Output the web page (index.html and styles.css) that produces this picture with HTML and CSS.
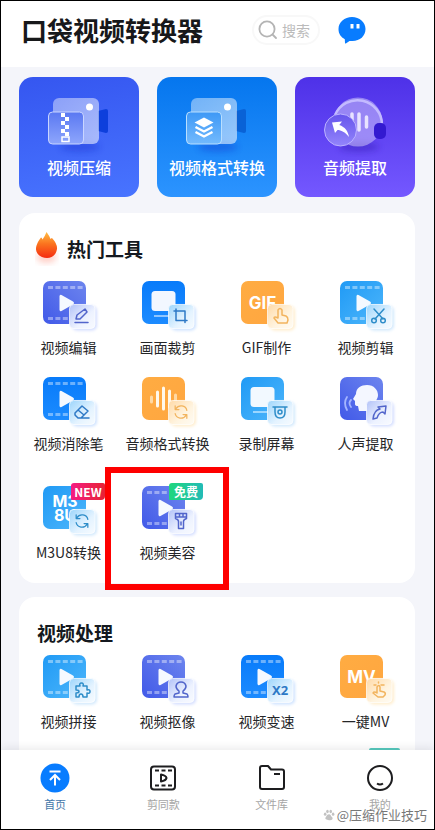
FILE: index.html
```html
<!DOCTYPE html>
<html lang="zh-CN">
<head>
<meta charset="utf-8">
<meta name="viewport" content="width=device-width, initial-scale=1">
<title>口袋视频转换器</title>
<link rel="stylesheet" href="styles.css">
</head>
<body>
<svg class="defs" aria-hidden="true">
  <defs>
    <linearGradient id="indigo" x1="1" y1="0" x2="0" y2="1"><stop offset="0" stop-color="#6d85ee"/><stop offset="1" stop-color="#4159e8"/></linearGradient>
    <linearGradient id="blue" x1="0" y1="0" x2="0" y2="1"><stop offset="0" stop-color="#087bfa"/><stop offset="1" stop-color="#1c8bff"/></linearGradient>
    <linearGradient id="sky" x1="0" y1="0" x2="1" y2="1"><stop offset="0" stop-color="#209af5"/><stop offset="1" stop-color="#4db6fb"/></linearGradient>
    <linearGradient id="orange" x1="0" y1="0" x2="1" y2="1"><stop offset="0" stop-color="#ffac42"/><stop offset="1" stop-color="#ffa640"/></linearGradient>
    <linearGradient id="frostIndigo" x1="0" y1="0" x2="1" y2="1"><stop offset="0.1" stop-color="#bccaf9"/><stop offset="0.6" stop-color="#edf2ff"/><stop offset="1" stop-color="#f8faff"/></linearGradient>
    <linearGradient id="frostBlue" x1="0" y1="0" x2="1" y2="1"><stop offset="0.1" stop-color="#a8dafc"/><stop offset="0.6" stop-color="#e4f3ff"/><stop offset="1" stop-color="#f6fbff"/></linearGradient>
    <linearGradient id="frostOrange" x1="0" y1="0" x2="1" y2="1"><stop offset="0.1" stop-color="#ffdeb0"/><stop offset="0.6" stop-color="#fff4e0"/><stop offset="1" stop-color="#fffbf2"/></linearGradient>
    <linearGradient id="flame" x1="0" y1="0" x2="0" y2="1"><stop offset="0" stop-color="#ffbd45"/><stop offset="0.45" stop-color="#fb741f"/><stop offset="1" stop-color="#f52b10"/></linearGradient>
    <linearGradient id="glass" x1="0" y1="0" x2="1" y2="1"><stop offset="0" stop-color="#fff" stop-opacity="0.42"/><stop offset="1" stop-color="#fff" stop-opacity="0.55"/></linearGradient>
    <linearGradient id="indigoPane" x1="0" y1="0" x2="0" y2="1"><stop offset="0" stop-color="#5a78f2"/><stop offset="1" stop-color="#8ea6fc"/></linearGradient>
    <linearGradient id="bluePane" x1="0" y1="0" x2="0" y2="1"><stop offset="0" stop-color="#3d98f6"/><stop offset="1" stop-color="#73bafd"/></linearGradient>
    <linearGradient id="violetPane" x1="0" y1="0" x2="0" y2="1"><stop offset="0" stop-color="#6655ec"/><stop offset="1" stop-color="#9385fb"/></linearGradient>
    <filter id="soft" x="-50%" y="-100%" width="200%" height="300%"><feGaussianBlur stdDeviation="3"/></filter>
    <filter id="haze" x="-30%" y="-30%" width="160%" height="160%"><feGaussianBlur stdDeviation="1.500"/></filter>
  </defs>
  <symbol id="film" viewBox="0 0 58 56">
    <path d="M5 6.500h35M5 37.500h20" stroke="#fff" stroke-opacity=".4" stroke-width="3.200" stroke-dasharray="5 2.400"/>
    <path d="M16.500 15.500v13q0 2.500 2 1.500l11.500-6.500q2-1.500 0-3L18.500 14q-2-1-2 1.500z" fill="#f5f9ff"/>
  </symbol>
  <symbol id="pad" viewBox="0 0 58 56">
    <rect x="29" y="25" width="25" height="24.500" rx="5" class="pad-shadow"/>
    <rect x="26.500" y="23.500" width="25.500" height="24" rx="4" class="pad-face"/>
  </symbol>
  <symbol id="cycle" viewBox="0 0 24 24">
    <path d="M19 10a7 6.500 0 0 0-13-2M5 14a7 6.500 0 0 0 13 2M5 4.500V9h4.500M19 19.500V15h-4.500"/>
  </symbol>
  <symbol id="camera" viewBox="0 0 64 60">
    <ellipse cx="33" cy="50" rx="20" ry="5" fill="#0a24c4" opacity=".3" filter="url(#soft)"/>
    <path d="M51 14l8-2q2 0 2 2v20q0 2-2 2l-8-2z" class="lens"/>
    <rect x="6" y="1" width="46" height="46" rx="6" fill="url(#glass)"/>
    <circle cx="42.500" cy="10" r="3.500" fill="#fff"/>
  </symbol>
</svg>

<div class="app">
  <header class="topbar">
    <h1>口袋视频转换器</h1>
    <label class="search">
      <svg viewBox="0 0 20 20" width="20" height="20" fill="none" stroke="#b4b4b4" stroke-width="1.800" stroke-linecap="round"><circle cx="9" cy="9" r="7.600"/><path d="M15 15l3 3"/></svg>
      <input type="search" placeholder="搜索" aria-label="搜索">
    </label>
    <button class="chat" aria-label="消息">
      <svg viewBox="0 0 28 28" width="28" height="28"><path d="M14 1C6.500 1 .5 6 .5 13c0 5 2.500 8 6.300 10.200L7 27q.3 1 1.200.3L11.500 25h3C22 25 27.500 20 27.500 13S21.500 1 14 1z" fill="#087cff"/><path d="M14 8v4.500M20 8v4.500" stroke="#fff" stroke-width="3"/></svg>
    </button>
  </header>

  <main>
    <nav class="features" aria-label="主要功能">
      <a href="#compress" class="feature feature-indigo">
        <svg viewBox="0 0 64 60" width="64" height="60"><use href="#camera"/><rect x="1.500" y="15" width="35" height="32" rx="4" fill="url(#indigoPane)" stroke="#c9d5ff"/><path d="M14 16h4v4h-4zM18 20h4v4h-4zM14 24h4v4h-4zM18 28h4v4h-4zM14 32h4v4h-4zM18 35h4v4h-4z" fill="#fff"/><rect x="15" y="40" width="7" height="4.500" fill="none" stroke="#fff" stroke-width="1.500"/></svg>
        <span>视频压缩</span>
      </a>
      <a href="#convert" class="feature feature-blue">
        <svg viewBox="0 0 64 60" width="64" height="60"><use href="#camera"/><rect x="1.500" y="15" width="35" height="32" rx="4" fill="url(#bluePane)" stroke="#b9dfff"/><path d="M19 20.500l9.500 5-9.500 5-9.500-5z" fill="#fff"/><path d="M10.500 30l8.500 4.500 8.500-4.500M10.500 35l8.500 4.500 8.500-4.500" fill="none" stroke="#fff" stroke-width="2.400"/></svg>
        <span>视频格式转换</span>
      </a>
      <a href="#audio" class="feature feature-violet">
        <svg viewBox="0 0 64 60" width="64" height="60"><ellipse cx="36" cy="50" rx="20" ry="5" fill="#2e12ad" opacity=".4" filter="url(#soft)"/><circle cx="35" cy="25" r="24.500" fill="#fff" opacity=".38"/><path d="M12 18A24.500 24.500 0 0 1 59 28" fill="none" stroke="#c3baff" stroke-width="2.500"/><rect x="51" y="26" width="12" height="16" rx="5" fill="#331ad0"/><path d="M29 17v15M36 17v16M43.500 20v10" stroke="#e8e3ff" stroke-width="3.500" stroke-linecap="round"/><circle cx="17.500" cy="33" r="16" fill="url(#violetPane)" stroke="#bcb2ff"/><path d="M9 25.500l10-1-2.700 3.500C22 30 25 34 26 40c-4-5-8-7-11.500-7l-2.500 3z" fill="#fff"/></svg>
        <span>音频提取</span>
      </a>
    </nav>

    <section class="panel">
      <h2><svg viewBox="0 0 24 36" width="24" height="36"><ellipse cx="11.500" cy="27" rx="10" ry="6" fill="#ff7860" opacity=".35" filter="url(#soft)"/><path d="M11.500 2q3 4 4 7 1-1 1.500-1 5.500 6 5 11c-1 6-5 9-10 9S1.500 25 1 19.500C.8 15 4 10 6 7.500q1 0 1.500 2Q10 6 11.500 2z" fill="url(#flame)"/></svg>热门工具</h2>
      <div class="tools">
        <a href="#edit" class="tool">
          <svg class="indigo" viewBox="0 0 58 56"><rect width="43" height="43" rx="7" fill="url(#indigo)"/><use href="#film"/><use href="#pad"/><g class="glyph"><path d="M33 38l1-4 8-6 2 3-7 7zM32 41.500h13"/></g></svg>
          <span>视频编辑</span>
        </a>
        <a href="#crop" class="tool">
          <svg class="blue" viewBox="0 0 58 56"><rect width="43" height="43" rx="7" fill="url(#blue)"/><rect x="9.500" y="10" width="24" height="20" rx="3.500" fill="#f2f7ff"/><path d="M12 35h20" stroke="#8ec5ff" stroke-width="2"/><use href="#pad"/><g class="glyph"><path d="M34 28v11.500h11M32 30h11v11.500"/></g></svg>
          <span>画面裁剪</span>
        </a>
        <a href="#gif" class="tool">
          <svg class="orange" viewBox="0 0 58 56"><rect width="43" height="43" rx="7" fill="url(#orange)"/><text x="21.500" y="28" class="word">GIF</text><use href="#pad"/><g class="glyph"><path d="M37 37v-8q2-3 4 0v5l4 1q2 1 2 4l-1 3h-9l-4-5q0-2 4 0"/></g></svg>
          <span>GIF制作</span>
        </a>
        <a href="#cut" class="tool">
          <svg class="sky" viewBox="0 0 58 56"><rect width="43" height="43" rx="7" fill="url(#sky)"/><use href="#film"/><use href="#pad"/><g class="glyph"><path d="M34 28l9 10M44 28l-9 10"/><circle cx="34" cy="39.500" r="2.300"/><circle cx="43" cy="39.500" r="2.300"/></g></svg>
          <span>视频剪辑</span>
        </a>
        <a href="#erase" class="tool">
          <svg class="blue" viewBox="0 0 58 56"><rect width="43" height="43" rx="7" fill="url(#blue)"/><use href="#film"/><use href="#pad"/><g class="glyph"><path d="M32 36l7-7 6 5-7 7h-3l-3-3zM35 33l6 5M36 41h10"/></g></svg>
          <span>视频消除笔</span>
        </a>
        <a href="#audio-format" class="tool">
          <svg class="orange" viewBox="0 0 58 56"><rect width="43" height="43" rx="7" fill="url(#orange)"/><path d="M15.500 15v14M21.500 11v21M27.500 14v16" stroke="#fff8eb" stroke-width="3" stroke-linecap="round"/><path d="M9.500 20v5M33.500 18v8" stroke="#ffd9a3" stroke-width="3" stroke-linecap="round"/><use href="#pad"/><use href="#cycle" x="29" y="25" width="20" height="20" class="glyph"/></svg>
          <span>音频格式转换</span>
        </a>
        <a href="#record" class="tool">
          <svg class="sky" viewBox="0 0 58 56"><rect width="43" height="43" rx="7" fill="url(#sky)"/><rect x="9.500" y="10" width="24" height="20" rx="3.500" fill="#f2f9ff"/><path d="M12 35h20" stroke="#9bd6ff" stroke-width="2"/><use href="#pad"/><g class="glyph"><path d="M32 30h14M34 30v5q0 6 5 6t5-6v-5"/><circle cx="39" cy="35" r="2"/></g></svg>
          <span>录制屏幕</span>
        </a>
        <a href="#voice" class="tool">
          <svg class="indigo" viewBox="0 0 58 56"><rect width="43" height="43" rx="7" fill="url(#indigo)"/><path d="M19 34l-1-5q-3 0-3-2v-3l-2-2 3-5C16 11 21 8 27 8c7 0 11 5 11 10 0 4-3 7-5 9l1 7z" fill="#f4f7ff"/><path d="M11 23q-3 3 0 7M7 20q-4 6 0 13" fill="none" stroke="#a4b5ff" stroke-width="1.800" stroke-linecap="round"/><use href="#pad"/><g class="glyph"><path d="M33 42q1-9 7-10l-2-2 8-1-1 8-2-2q-4 0-6 6z"/></g></svg>
          <span>人声提取</span>
        </a>
      </div>
      <div class="tools tools-tagged">
        <a href="#m3u8" class="tool">
          <svg class="sky" viewBox="0 0 58 56"><rect width="43" height="43" rx="7" fill="url(#sky)"/><text x="22" y="21" class="word word-stack">M3</text><text x="22" y="35" class="word word-stack">8U</text><use href="#pad"/><use href="#cycle" x="29" y="25" width="20" height="20" class="glyph"/></svg>
          <span>M3U8转换</span>
          <b class="tag tag-new">NEW</b>
        </a>
        <a href="#beauty" class="tool marked">
          <svg class="indigo" viewBox="0 0 58 56"><rect width="43" height="43" rx="7" fill="url(#indigo)"/><use href="#film"/><use href="#pad"/><g class="glyph"><path d="M33.500 27.500h11v5q-3 1-3 3v7h-5v-7q0-2-3-3zM33.500 31h11M37.500 28v2M41 28v2M39 36v3"/></g></svg>
          <span>视频美容</span>
          <b class="tag tag-free">免费</b>
        </a>
      </div>
    </section>

    <section class="panel panel-video">
      <h2>视频处理</h2>
      <div class="tools">
        <a href="#join" class="tool">
          <svg class="sky" viewBox="0 0 58 56"><rect width="43" height="43" rx="7" fill="url(#sky)"/><use href="#film"/><use href="#pad"/><g class="glyph"><path d="M33 31h4q-1-3 1.500-3t1.500 3h4v4q3-1 3 1.500T44 38v4h-4q0-3-2-3t-2 3h-3v-4q3 0 3-1.500T33 35z"/></g></svg>
          <span>视频拼接</span>
        </a>
        <a href="#cutout" class="tool">
          <svg class="indigo" viewBox="0 0 58 56"><rect width="43" height="43" rx="7" fill="url(#indigo)"/><use href="#film"/><use href="#pad"/><g class="glyph"><path d="M37 36q-3-2-3-5 1-4 5-4t5 4q0 3-3 5v2l4 1q1 1 1 3H32q0-2 1-3l4-1z"/></g></svg>
          <span>视频抠像</span>
        </a>
        <a href="#speed" class="tool">
          <svg class="blue" viewBox="0 0 58 56"><rect width="43" height="43" rx="7" fill="url(#blue)"/><use href="#film"/><use href="#pad"/><text x="39" y="40" class="times">X2</text></svg>
          <span>视频变速</span>
        </a>
        <a href="#mv" class="tool">
          <svg class="orange" viewBox="0 0 58 56"><rect width="43" height="43" rx="7" fill="url(#orange)"/><text x="21.500" y="28" class="word">MV</text><use href="#pad"/><g class="glyph"><path d="M37 38v-6q2-3 3 0v4l4 1q2 1 1 3l-2 2h-5l-5-4q1-2 4 0M34 30h2M41 30h3M38.500 27v1"/></g></svg>
          <span>一键MV</span>
        </a>
      </div>
      <div class="tools tools-next"><i class="next-tag"></i></div>
    </section>
  </main>

  <footer>
    <nav class="tabs" aria-label="底部导航">
      <a href="#home" class="active"><svg viewBox="0 0 30 30"><circle cx="15" cy="15" r="14.500" fill="#087cff"/><path d="M9.500 8.500h11M15 22.500V12M10 17l5-5 5 5" fill="none" stroke="#fff" stroke-width="2"/></svg>首页</a>
      <a href="#templates"><svg viewBox="0 0 30 30" class="line"><rect x="3" y="3.500" width="24" height="23" rx="3"/><path d="M7 7.500h17M7 22.500h17" stroke-dasharray="4 2.500"/><path d="M13 11.500v7q5-1 5.500-3.500-.5-2.500-5.500-3.500z"/></svg>剪同款</a>
      <a href="#files"><svg viewBox="0 0 30 30" class="line"><path d="M3 5q0-2 2-2h6l3 3.500h11q2 0 2 2V24q0 2-2 2H5q-2 0-2-2zM17 11h6"/></svg>文件库</a>
      <a href="#me"><svg viewBox="0 0 30 30" class="line"><circle cx="15" cy="15" r="12"/><path d="M12 20.500q3 2 6 0"/></svg>我的</a>
    </nav>
    <p class="watermark"><svg viewBox="0 0 14 14" width="12" height="12" fill="#c2c2c2"><ellipse cx="2.500" cy="6" rx="1.500" ry="2"/><ellipse cx="5.200" cy="3" rx="1.500" ry="2"/><ellipse cx="9" cy="3" rx="1.500" ry="2"/><ellipse cx="11.800" cy="6" rx="1.500" ry="2"/><path d="M7 6c2 0 2 2 4 4 1 2-1 3.500-4 3S2 12 3 10s2-4 4-4z"/></svg>@压缩作业技巧</p>
  </footer>
</div>
</body>
</html>
```

FILE: styles.css
```css
*,
*::before,
*::after {
  box-sizing: border-box;
}

body {
  margin: 0;
  font-family: "Noto Sans CJK SC", sans-serif;
  color: #252628;
}

a {
  color: inherit;
  text-decoration: none;
}

.defs {
  position: absolute;
  width: 0;
  height: 0;
}

.app {
  display: flex;
  flex-direction: column;
  height: 100vh;
  border: 1px solid #000;
  background: #f4f5fa;
  overflow: hidden;
}

.topbar {
  display: flex;
  align-items: center;
  flex: none;
  gap: 18px;
  padding: 9px 68px 18px 20px;
  background: #fff;
}

h1 {
  margin: 0 auto 0 0;
  font-size: 26px;
  line-height: 39px;
  font-weight: 700;
  color: #17181a;
}

.search {
  display: flex;
  align-items: center;
  flex: none;
  gap: 4px;
  width: 68px;
  height: 30px;
  padding-left: 4px;
  border: 2px solid #f8f8f8;
  border-radius: 15px;
}

.search svg {
  flex: none;
}

.search input {
  flex: 1;
  min-width: 0;
  padding: 0;
  border: 0;
  outline: 0;
  background: none;
  appearance: none;
  font: 14px "Noto Sans CJK SC", sans-serif;
}

.search input::-webkit-search-cancel-button {
  display: none;
}

.search input::placeholder {
  color: #bbb;
}

.chat {
  display: flex;
  padding: 0;
  border: 0;
  background: none;
}

main {
  flex: 1;
  min-height: 0;
  padding: 10px 19px 0 18px;
  overflow: hidden;
}

.features {
  display: grid;
  grid-template-columns: repeat(3, 1fr);
  gap: 18px;
  margin-bottom: 16px;
}

.feature {
  display: flex;
  flex-direction: column;
  align-items: center;
  height: 120px;
  padding-top: 20px;
  border-radius: 14px;
  color: #fff;
  font-size: 16px;
  line-height: 20px;
  font-weight: 500;
}

.feature-indigo {
  --lens: #0d3fdc;
  background: linear-gradient(170deg, #3556f0, #4874ff);
}

.feature-blue {
  --lens: #0962d6;
  background: linear-gradient(#0576ee, #2c94ff);
}

.feature-violet {
  background: linear-gradient(#4e31e8, #7458ff);
}

.lens {
  fill: var(--lens);
}

.panel {
  margin-bottom: 14px;
  padding: 18px 0 20px;
  border-radius: 16px;
  background: #fff;
}

h2 {
  display: flex;
  align-items: center;
  gap: 8px;
  height: 34px;
  margin: 0 0 16px 16px;
  font-size: 19px;
  font-weight: 700;
  color: #141920;
}

.panel-video h2 {
  margin: 0 0 6px 18px;
}

.tools {
  display: grid;
  grid-template-columns: repeat(4, 1fr);
  row-gap: 19px;
}

.tools-tagged {
  margin-top: 32px;
}

.tools-next {
  margin-top: 16px;
}

.tool {
  position: relative;
  display: flex;
  flex-direction: column;
  align-items: center;
  font-size: 14px;
  line-height: 21px;
  white-space: nowrap;
}

.tool > svg {
  width: 58px;
  height: 56px;
  margin-left: 7px;
  overflow: visible;
}

.indigo {
  --ink: #5265cb;
  --face: url(#frostIndigo);
  --shade: #d3ddff;
}

.blue {
  --ink: #2e79c6;
  --face: url(#frostBlue);
  --shade: #cde2ff;
}

.sky {
  --ink: #2e8dc9;
  --face: url(#frostBlue);
  --shade: #d0e8fc;
}

.orange {
  --ink: #f2b45e;
  --face: url(#frostOrange);
  --shade: #ffedcc;
}

.pad-face {
  fill: var(--face);
  stroke: #fff;
  stroke-opacity: 0.7;
}

.pad-shadow {
  fill: var(--shade);
  filter: url(#haze);
}

.glyph {
  fill: none;
  stroke: var(--ink);
  stroke-width: 1.5;
  stroke-linecap: round;
  stroke-linejoin: round;
}

.word {
  fill: #fff;
  font: 700 17px Inter, sans-serif;
  text-anchor: middle;
}

.word-stack {
  font-size: 16px;
}

.times {
  fill: #2e79c6;
  font: 700 13px "Noto Sans", sans-serif;
  text-anchor: middle;
}

.tag {
  position: absolute;
  top: -3px;
  left: 52px;
  width: 34px;
  height: 17px;
  border-radius: 3px 2px 4px 1px;
  color: #fff;
  font-size: 12px;
  line-height: 17px;
  font-weight: 700;
  text-align: center;
}

.tag-new {
  background: linear-gradient(90deg, #f51c83, #e72334);
}

.tag-free {
  left: 51px;
  background: linear-gradient(90deg, #1fd77d, #22bbb6);
}

.marked::after {
  content: "";
  position: absolute;
  top: -19px;
  left: -13px;
  width: 124px;
  height: 123px;
  border: 6px solid #fe0000;
}

.next-tag {
  grid-column: 4;
  width: 31px;
  height: 17px;
  margin-left: 53px;
  border-radius: 2px;
  background: #55c9bd;
}

footer {
  position: relative;
  flex: none;
  background: #fff;
  box-shadow: 0 -2px 8px rgba(50, 50, 60, 0.1);
}

.tabs {
  display: grid;
  grid-template-columns: repeat(4, 1fr);
  height: 79px;
  padding-top: 13px;
}

.tabs a {
  display: flex;
  flex-direction: column;
  align-items: center;
  gap: 3px;
  color: #a5a5a5;
  font-size: 11px;
  line-height: 16px;
}

.tabs svg {
  width: 30px;
  height: 30px;
}

.tabs .active {
  color: #4377a9;
}

.line {
  fill: none;
  stroke: #1d1d1f;
  stroke-width: 2;
  stroke-linejoin: round;
}

.watermark {
  position: absolute;
  right: 7px;
  bottom: 5px;
  display: flex;
  align-items: center;
  gap: 2px;
  margin: 0;
  color: #777;
  font-size: 13px;
  line-height: 18px;
  text-shadow: 0 0 1px #fff, 1px 1px 0 #fff;
}
```
